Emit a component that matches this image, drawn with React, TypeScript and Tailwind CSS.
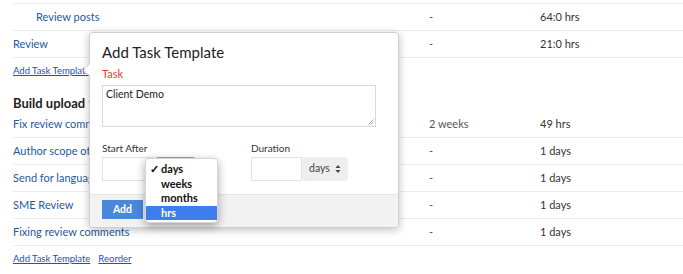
import React from "react";

const font = { fontFamily: "Lato, 'Open Sans', 'Liberation Sans', sans-serif" };

function Row({ name, c2, c3, indent = false }: { name: string; c2: string; c3: string; indent?: boolean }) {
  return (
    <div className="flex h-[27px] items-center border-b border-[#ececec] text-[11px]">
      <div className={"w-[416px] text-[#1d5a99] whitespace-nowrap " + (indent ? "pl-[23px]" : "")}>{name}</div>
      <div className="w-[111px] text-[#555]">{c2}</div>
      <div className="text-[#333]">{c3}</div>
    </div>
  );
}

export default function App() {
  return (
    <div className="relative w-[683px] h-[274px] overflow-hidden bg-white" style={font}>
      <div className="pl-[13px]">
        <div className="mt-[3px] border-t border-[#ececec]" />
        <Row name="Review posts" c2="-" c3="64:0 hrs" indent />
        <Row name="Review" c2="-" c3="21:0 hrs" />
        <div className="h-[26px] flex items-center">
          <a className="text-[9.5px] text-[#1a4fd0] underline">Add Task Template</a>
        </div>
        <div className="h-[27px] pt-[10px] leading-[18px] text-[13px] font-bold text-[#222]">Build upload tasks</div>
        <Row name="Fix review comments" c2="2 weeks" c3="49 hrs" />
        <Row name="Author scope of work" c2="-" c3="1 days" />
        <Row name="Send for language review" c2="-" c3="1 days" />
        <Row name="SME Review" c2="-" c3="1 days" />
        <Row name="Fixing review comments" c2="-" c3="1 days" />
        <div className="h-[26px] flex items-center gap-[8px] text-[9.5px]">
          <a className="text-[#1a4fd0] underline">Add Task Template</a>
          <a className="text-[#1a4fd0] underline">Reorder</a>
        </div>
      </div>

      {/* popover */}
      <div className="absolute left-[89px] top-[32px] w-[310px] h-[196px] bg-white border border-[#cfcfcf] rounded-[4px] shadow-[0_2px_8px_rgba(0,0,0,0.25)]">
        <div className="absolute -left-[7px] top-[30px] w-0 h-0 border-y-[7px] border-y-transparent border-r-[7px] border-r-[#d0d0d0]" />
        <div className="absolute -left-[6px] top-[30px] w-0 h-0 border-y-[7px] border-y-transparent border-r-[7px] border-r-white" />
        <div className="px-[12px] pt-[9px]">
          <div className="text-[15px] leading-[20px] text-[#222]">Add Task Template</div>
          <div className="mt-[5px] text-[11px] leading-[14px] text-[#d9412b]">Task</div>
          <div className="mt-[4px] relative w-[274px] h-[42px] border border-[#d8d8d8] px-[3px] pt-[1px] text-[10.5px] text-[#222]">
            Client Demo
            <svg className="absolute right-[1px] bottom-[1px]" width="6" height="6" viewBox="0 0 6 6">
              <path d="M5.5 0.5 L0.5 5.5 M5.5 3 L3 5.5" stroke="#888" strokeWidth="0.8" />
            </svg>
          </div>
          <div className="mt-[14px] flex">
            <div className="w-[149px]">
              <div className="text-[10px] leading-[14px] text-[#333]">Start After</div>
              <div className="mt-[2px] flex">
                <div className="w-[52px] h-[24px] border border-[#e2e2e2]" />
                <div className="w-[43px] h-[24px] rounded-[4px] bg-[#eeeeee] border border-[#7aa7e8]" />
              </div>
            </div>
            <div>
              <div className="text-[10px] leading-[14px] text-[#333]">Duration</div>
              <div className="mt-[2px] flex">
                <div className="w-[51px] h-[24px] border border-[#e2e2e2]" />
                <div className="w-[46px] h-[24px] rounded-[4px] bg-[#eeeeee] flex items-center pl-[7px] gap-[5px] text-[10.5px] text-[#444]">
                  days
                  <svg width="6" height="10" viewBox="0 0 6 10">
                    <path d="M0.5 4 L3 1 L5.5 4 Z M0.5 6 L3 9 L5.5 6 Z" fill="#444" />
                  </svg>
                </div>
              </div>
            </div>
          </div>
        </div>
        <div className="absolute left-0 right-0 bottom-0 h-[33px] bg-[#f2f2f2] border-t border-[#e6e6e6] rounded-b-[4px] px-[12px] pt-[5px]">
          <div className="w-[41px] h-[19px] bg-[#4a88de] text-white text-[10.5px] font-bold flex items-center justify-center">Add</div>
        </div>
      </div>

      {/* native select menu */}
      <div className="absolute left-[145px] top-[158px] w-[73px] h-[65px] bg-white rounded-[4px] shadow-[0_3px_10px_rgba(0,0,0,0.35)] border border-[#d6d6d6] pt-[3px] text-[11px] leading-[14.5px] font-bold text-[#111]">
        <div className="relative pl-[15px]"><span className="absolute left-[4px]">✓</span>days</div>
        <div className="pl-[15px]">weeks</div>
        <div className="pl-[15px]">months</div>
        <div className="pl-[15px] bg-[#3d7ded] text-white">hrs</div>
      </div>
    </div>
  );
}
